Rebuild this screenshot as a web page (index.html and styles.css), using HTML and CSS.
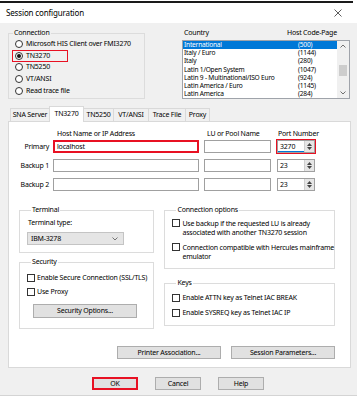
FILE: index.html
```html
<!DOCTYPE html>
<html>
<head>
<meta charset="utf-8">
<title>Session configuration</title>
<link rel="stylesheet" href="styles.css">
</head>
<body>
<div class="screen">
  <div class="topline"></div>
  <div class="titlebar">
    <span class="title">Session configuration</span>
    <svg class="close" width="8" height="8" viewBox="0 0 8 8"><path d="M0.5 0.5 L7.5 7.5 M7.5 0.5 L0.5 7.5" stroke="#333" stroke-width="0.8" fill="none"/></svg>
  </div>
  <div class="dialog">
    <div class="top-row">
      <fieldset class="group conn">
        <legend>Connection</legend>
        <div class="radio"><span class="rb"></span><span>Microsoft HIS Client over FMI3270</span></div>
        <div class="radio"><span class="redbox"><span class="rb on"></span><span>TN3270</span></span></div>
        <div class="radio"><span class="rb"></span><span>TN5250</span></div>
        <div class="radio"><span class="rb"></span><span>VT/ANSI</span></div>
        <div class="radio"><span class="rb"></span><span>Read trace file</span></div>
      </fieldset>
      <div class="country">
        <div class="list-head"><span class="h-country">Country</span><span class="h-cp">Host Code-Page</span></div>
        <div class="list">
          <div class="rows">
            <div class="row hl"><span class="c">International</span><span>(500)</span></div>
            <div class="row"><span class="c">Italy / Euro</span><span>(1144)</span></div>
            <div class="row"><span class="c">Italy</span><span>(280)</span></div>
            <div class="row"><span class="c">Latin 1/Open System</span><span>(1047)</span></div>
            <div class="row"><span class="c">Latin 9 - Multinational/ISO Euro</span><span>(924)</span></div>
            <div class="row"><span class="c">Latin America / Euro</span><span>(1145)</span></div>
            <div class="row"><span class="c">Latin America</span><span>(284)</span></div>
          </div>
          <div class="scroll">
            <svg class="arr" width="6" height="4" viewBox="0 0 6 4"><path d="M0.5 3.5 L3 1 L5.5 3.5" stroke="#606060" stroke-width="0.9" fill="none"/></svg>
            <span class="thumb"></span>
            <svg class="arr" width="6" height="4" viewBox="0 0 6 4"><path d="M0.5 0.5 L3 3 L5.5 0.5" stroke="#606060" stroke-width="0.9" fill="none"/></svg>
          </div>
        </div>
      </div>
    </div>

    <div class="tabs">
      <div class="tab t-sna">SNA Server</div>
      <div class="tab t-tn3270 active">TN3270</div>
      <div class="tab t-tn5250">TN5250</div>
      <div class="tab t-vt">VT/ANSI</div>
      <div class="tab t-trace">Trace File</div>
      <div class="tab t-proxy">Proxy</div>
    </div>

    <div class="panel">
      <div class="hrow head">
        <span class="lbl"></span>
        <span class="host hl-host">Host Name or IP Address</span>
        <span class="lu hl-lu">LU or Pool Name</span>
        <span class="port hl-port">Port Number</span>
      </div>
      <div class="hrow first">
        <span class="lbl">Primary</span>
        <span class="host field red">localhost</span>
        <span class="lu field"></span>
        <span class="port spin redout"><span class="num focus">3270</span><span class="btns"><svg width="5" height="3" viewBox="0 0 5 3"><path d="M0 3 L2.5 0 L5 3Z" fill="#444"/></svg><svg width="5" height="3" viewBox="0 0 5 3"><path d="M0 0 L2.5 3 L5 0Z" fill="#444"/></svg></span></span>
      </div>
      <div class="hrow">
        <span class="lbl">Backup 1</span>
        <span class="host field"></span>
        <span class="lu field"></span>
        <span class="port spin"><span class="num">23</span><span class="btns"><svg width="5" height="3" viewBox="0 0 5 3"><path d="M0 3 L2.5 0 L5 3Z" fill="#444"/></svg><svg width="5" height="3" viewBox="0 0 5 3"><path d="M0 0 L2.5 3 L5 0Z" fill="#444"/></svg></span></span>
      </div>
      <div class="hrow">
        <span class="lbl">Backup 2</span>
        <span class="host field"></span>
        <span class="lu field"></span>
        <span class="port spin"><span class="num">23</span><span class="btns"><svg width="5" height="3" viewBox="0 0 5 3"><path d="M0 3 L2.5 0 L5 3Z" fill="#444"/></svg><svg width="5" height="3" viewBox="0 0 5 3"><path d="M0 0 L2.5 3 L5 0Z" fill="#444"/></svg></span></span>
      </div>

      <div class="groups">
        <div class="col left">
          <fieldset class="group terminal">
            <legend>Terminal</legend>
            <div class="ttype">Terminal type:</div>
            <div class="select"><span>IBM-3278</span><svg width="6" height="4" viewBox="0 0 6 4"><path d="M0.5 0.5 L3 3 L5.5 0.5" stroke="#555" stroke-width="0.8" fill="none"/></svg></div>
          </fieldset>
          <fieldset class="group security">
            <legend>Security</legend>
            <div class="check"><span class="cb"></span><span>Enable Secure Connection (SSL/TLS)</span></div>
            <div class="check"><span class="cb"></span><span>Use Proxy</span></div>
            <div class="btn secbtn">Security Options...</div>
          </fieldset>
        </div>
        <div class="col right">
          <fieldset class="group connopt">
            <legend>Connection options</legend>
            <div class="check multi"><span class="cb"></span><span>Use backup if the requested LU is already<br>associated with another TN3270 session</span></div>
            <div class="check multi"><span class="cb"></span><span>Connection compatible with Hercules mainframe<br>emulator</span></div>
          </fieldset>
          <fieldset class="group keys">
            <legend>Keys</legend>
            <div class="check"><span class="cb"></span><span>Enable ATTN key as Telnet IAC BREAK</span></div>
            <div class="check"><span class="cb"></span><span>Enable SYSREQ key as Telnet IAC IP</span></div>
          </fieldset>
        </div>
      </div>

      <div class="panel-btns">
        <div class="btn wide">Printer Association...</div>
        <div class="btn wide">Session Parameters...</div>
      </div>
    </div>

    <div class="buttons">
      <div class="btn dlg ok">OK</div>
      <div class="btn dlg">Cancel</div>
      <div class="btn dlg">Help</div>
    </div>
  </div>
  <div class="taskbar"></div>
</div>
</body>
</html>
```

FILE: styles.css
```css
* { box-sizing: border-box; margin: 0; padding: 0; }
html, body { width: 357px; height: 400px; overflow: hidden; background: #fff; }
body {
  font-family: "Noto Sans", "Liberation Sans", sans-serif;
  font-size: 7px;
  line-height: 10px;
  color: #000;
  letter-spacing: -0.2px;
  white-space: nowrap;
}
.screen { width: 357px; height: 400px; display: flex; flex-direction: column; }
.topline { height: 2px; margin-top: 1px; width: 353px; background: #1a1a1a; }
.titlebar {
  height: 20px; background: #fff;
  display: flex; align-items: center; justify-content: space-between;
  padding: 0 15px 0 6px;
}
.title { font-size: 8px; letter-spacing: -0.15px; }
.close { display: block; }

.dialog {
  height: 372px; background: #f0f0f0;
  padding: 5px 6px 0 8px;
  display: flex; flex-direction: column;
}

/* group boxes */
.group {
  border: 1px solid #dcdcdc;
  min-width: 0;
}
.group legend { margin-left: 4px; padding: 0 1px; line-height: 10px; }

.top-row { display: flex; height: 71px; }
.conn { width: 137px; height: 71px; }
.radio { display: flex; align-items: center; height: 11.75px; padding-left: 6px; gap: 3px; }
.rb {
  width: 8px; height: 8px; border-radius: 50%;
  border: 1px solid #333; background: #fff;
  display: flex; align-items: center; justify-content: center; flex: none;
}
.rb.on::after { content: ""; width: 4px; height: 4px; border-radius: 50%; background: #111; }
.redbox {
  display: flex; align-items: center; gap: 3px;
  width: 56px; height: 12px; margin-left: -3px; padding-left: 3px;
  outline: 1.5px solid #e81123; outline-offset: -1px;
}

.country { margin-left: 37px; width: 168px; display: flex; flex-direction: column; }
.list-head { height: 12px; display: flex; padding: 0 0 2px 2px; align-items: center; }
.h-country { width: 103px; }
.list { height: 59px; border: 1px solid #9fa3aa; background: #fff; display: flex; }
.rows { flex: 1; overflow: hidden; }
.row { height: 8.2px; line-height: 8.2px; display: flex; font-size: 6.6px; }
.row .c { width: 115px; padding-left: 1px; }
.row.hl { background: #0078d7; color: #fff; }
.scroll { width: 12px; background: #f0f0f0; display: flex; flex-direction: column; align-items: center; }
.scroll .arr { margin: 3px 0; flex: none; }
.thumb { width: 8px; height: 11px; background: #cdcdcd; margin-top: 14px; margin-bottom: auto; }

/* tabs */
.tabs { display: flex; align-items: flex-end; height: 15px; margin-top: 7px; padding-left: 2px; }
.tab {
  height: 13px; line-height: 12px; text-align: center;
  border: 1px solid #d9d9d9; border-bottom: none; margin-right: -1px;
  background: #f0f0f0;
}
.tab.active {
  height: 16px; background: #fff; margin-bottom: -1px;
  position: relative; z-index: 1; line-height: 14px;
}
.t-sna { width: 40px; }
.t-tn3270 { width: 35px; }
.t-tn5250 { width: 31px; }
.t-vt { width: 36px; }
.t-trace { width: 38px; }
.t-proxy { width: 25px; }

/* panel */
.panel {
  width: 343px; height: 247px; background: #fff;
  border: 1px solid #d9d9d9;
  padding: 7px 15px 0 0;
  display: flex; flex-direction: column;
}
.hrow { display: flex; align-items: center; height: 13px; margin-top: 6px; }
.hrow.head { height: 10px; margin-top: 0; }
.hrow.first { margin-top: 1px; }
.lbl { width: 44px; text-align: right; padding-right: 4px; }
.host { width: 146px; }
.lu { width: 67px; margin-left: 5px; }
.port { width: 38px; margin-left: 6px; }
.hl-host { padding-left: 4px; }
.hl-lu { padding-left: 3px; }
.hl-port { padding-left: 1px; width: 50px; }
.field {
  height: 13px; border: 1px solid #a0a0a0; background: #fff;
  padding-left: 3px; display: flex; align-items: center;
}
.field.red { border: 2px solid #e81123; padding-left: 2px; }
.spin { height: 13px; border: 1px solid #a0a0a0; display: flex; background: #fff; }
.spin .num { flex: 1; padding-left: 2px; display: flex; align-items: center; }
.spin .num.focus { box-shadow: inset 0 -1px 0 #0078d7; }
.spin .btns {
  width: 10px; background: #e6e6e6; border-left: 1px solid #d0d0d0;
  display: flex; flex-direction: column; align-items: center; justify-content: space-around;
  padding: 1px 0;
}
.spin .btns svg { display: block; }
.redout { outline: 1.5px solid #e81123; outline-offset: 0; }

.groups { display: flex; gap: 10px; margin: 14px 0 0 10px; }
.col { display: flex; flex-direction: column; }
.left { width: 139px; }
.right { width: 173px; }
.terminal { height: 48px; padding-left: 7px; }
.ttype { margin: 3px 0 0 1px; }
.select {
  width: 97px; height: 13px; margin-top: 4px;
  background: #e5e5e5; border: 1px solid #c4c4c4;
  display: flex; align-items: center; justify-content: space-between;
  padding: 0 5px 0 3px;
}
.security { height: 72px; margin-top: 4px; padding-left: 7px; }
.check { display: flex; align-items: center; gap: 2px; height: 10px; }
.security .check:first-of-type { margin-top: 6px; }
.security .check + .check { margin-top: 4px; }
.cb { width: 8px; height: 8px; border: 1px solid #333; background: #fff; flex: none; }
.btn {
  background: #e1e1e1; border: 1px solid #adadad;
  display: flex; align-items: center; justify-content: center;
}
.secbtn { width: 104px; height: 14px; margin: 7px 0 0 6px; }

.connopt { height: 64px; padding-left: 7px; }
.check.multi { height: auto; align-items: flex-start; line-height: 9px; }
.check.multi .cb { margin-top: 0.5px; }
.connopt .check:first-of-type { margin-top: 3.5px; }
.connopt .check + .check { margin-top: 6px; }
.keys { height: 48px; margin-top: 9px; padding-left: 7px; }
.keys .check:first-of-type { margin-top: 5px; }
.keys .check + .check { margin-top: 5px; }

.panel-btns { display: flex; justify-content: flex-end; gap: 10px; margin-top: 17px; }
.btn.wide { width: 104px; height: 13px; }

.buttons { display: flex; justify-content: center; gap: 17px; margin-top: 9px; padding-right: 3px; }
.btn.dlg { width: 46px; height: 13px; }
.btn.ok { border: 2px solid #e81123; }

.taskbar { flex: 1; border-top: 1px solid #d4d4d4; background: #fff; }
```
